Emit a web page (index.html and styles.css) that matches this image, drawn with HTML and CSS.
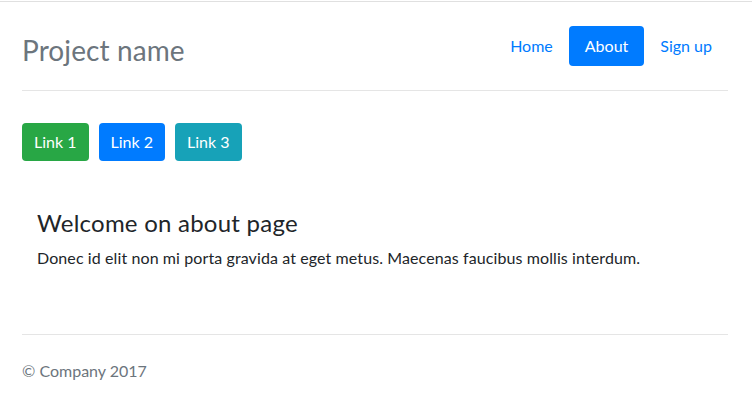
FILE: index.html
```html
<!DOCTYPE html>
<html lang="en">
<head>
<meta charset="utf-8">
<title>Project name - About</title>
<link rel="stylesheet" href="styles.css">
</head>
<body>
<div class="topline"></div>
<div class="container">
  <header class="header">
    <h3 class="brand">Project name</h3>
    <nav class="nav">
      <a class="nav-link" href="#">Home</a>
      <a class="nav-link active" href="#">About</a>
      <a class="nav-link" href="#">Sign up</a>
    </nav>
  </header>
  <div class="buttons">
    <a class="btn btn-green" href="#">Link 1</a>
    <a class="btn btn-blue" href="#">Link 2</a>
    <a class="btn btn-teal" href="#">Link 3</a>
  </div>
  <main class="content">
    <h4 class="title">Welcome on about page</h4>
    <p class="text">Donec id elit non mi porta gravida at eget metus. Maecenas faucibus mollis interdum.</p>
  </main>
  <footer class="footer">
    <p>&copy; Company 2017</p>
  </footer>
</div>
</body>
</html>
```
FILE: styles.css
```css
* { box-sizing: border-box; }
html, body {
  margin: 0;
  padding: 0;
  background: #fff;
}
body {
  font-family: Lato, "Noto Sans", sans-serif;
  font-size: 16px;
  line-height: 1.5;
  color: #212529;
}
.topline {
  margin-top: 1px;
  border-top: 1px solid #e0e0e0;
}
.container {
  padding: 24px 24px 0 22px;
}
.header {
  display: flex;
  justify-content: space-between;
  align-items: flex-start;
  padding-bottom: 16px;
  border-bottom: 1px solid #e5e5e5;
}
.brand {
  margin: 0;
  font-size: 28px;
  font-weight: 400;
  line-height: 48px;
  color: #6c757d;
  letter-spacing: 0.1px;
}
.nav {
  display: flex;
}
.nav-link {
  display: block;
  padding: 8px 16px;
  color: #007bff;
  text-decoration: none;
  border-radius: 4px;
  line-height: 24px;
}
.nav-link.active {
  background: #007bff;
  color: #fff;
}
.buttons {
  display: flex;
  gap: 10px;
  margin-top: 32px;
}
.btn {
  display: inline-block;
  padding: 7px 12px;
  line-height: 24px;
  color: #fff;
  text-decoration: none;
  border-radius: 4px;
  border: 0;
}
.btn-green { background: #28a745; }
.btn-blue { background: #007bff; }
.btn-teal { background: #17a2b8; }
.content {
  padding: 48px 15px 64px;
}
.title {
  margin: 0 0 8px;
  font-size: 24px;
  font-weight: 400;
  line-height: 1.2;
  letter-spacing: 0.24px;
}
.text {
  margin: 0;
  letter-spacing: 0.1px;
}
.footer {
  border-top: 1px solid #e5e5e5;
  padding-top: 24px;
  color: #6c757d;
}
.footer p {
  margin: 0;
}
```
